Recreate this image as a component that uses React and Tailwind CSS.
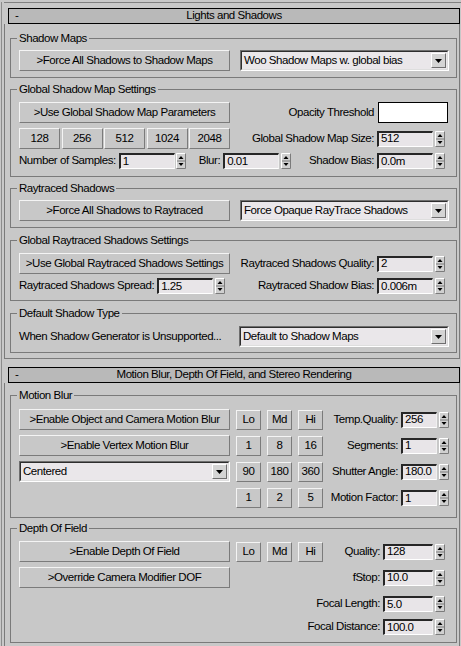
import React from "react";

function Btn({ children, className = "" }) {
  return (
    <button
      type="button"
      className={`flex shrink-0 items-center justify-center whitespace-nowrap border border-t-[#f4f4f4] border-l-[#f4f4f4] border-r-[#7b7b7b] border-b-[#7b7b7b] bg-[#c8c8c8] leading-none text-black ${className}`}
    >
      {children}
    </button>
  );
}

function Dropdown({ value, className = "" }) {
  return (
    <div className={`flex h-[21px] shrink-0 items-stretch border border-t-[#6e6e6e] border-l-[#6e6e6e] border-b-white border-r-white ${className}`}>
      <div className="flex flex-1 items-stretch border border-t-[#2e2e2e] border-l-[#2e2e2e] border-b-[#dedede] border-r-[#dedede] bg-[#eae7ea]">
        <span className="flex flex-1 items-center whitespace-nowrap pl-[2px]">{value}</span>
        <span className="m-[1px] flex w-[15px] items-center justify-center border border-t-white border-l-white border-b-[#6e6e6e] border-r-[#6e6e6e] bg-[#d4d4d4]">
          <svg width="7" height="4" viewBox="0 0 7 4">
            <path d="M0 0H7L3.5 4Z" fill="#000" />
          </svg>
        </span>
      </div>
    </div>
  );
}

function SpinArrows({ className = "" }) {
  return (
    <svg width="10" height="16" viewBox="0 0 10 16" className={`shrink-0 ${className}`}>
      <rect x="0" y="0" width="10" height="16" fill="#d0d0d0" />
      <path d="M0.5 15.5V0.5H9.5" stroke="#fff" fill="none" />
      <path d="M9.5 0.5V15.5H0.5" stroke="#7b7b7b" fill="none" />
      <path d="M1 8H9" stroke="#7b7b7b" />
      <path d="M5 3L7.5 6H2.5Z" fill="#000" />
      <path d="M5 13L7.5 10H2.5Z" fill="#000" />
    </svg>
  );
}

function Spinner({ value, inputClass = "w-[56px]", arrowsClass = "ml-[2px]" }) {
  return (
    <div className="flex shrink-0 items-center">
      <div
        className={`flex h-[16px] items-center border-t-2 border-l-2 border-b border-r border-t-[#262626] border-l-[#262626] border-b-white border-r-[#f0f0f0] bg-[#e8e5e8] pl-[2px] leading-none ${inputClass}`}
      >
        {value}
      </div>
      <SpinArrows className={arrowsClass} />
    </div>
  );
}

function Field({ label, value, inputClass, arrowsClass, className = "" }) {
  return (
    <div className={`flex shrink-0 items-center ${className}`}>
      <span className="whitespace-nowrap">{label}</span>
      <div className="ml-[3px]">
        <Spinner value={value} inputClass={inputClass} arrowsClass={arrowsClass} />
      </div>
    </div>
  );
}

function Group({ title, className = "", children }) {
  return (
    <fieldset className={`border border-[#7a7a7a] pl-[8px] pr-[7px] ${className}`}>
      <legend className="-ml-[2px] px-[2px] leading-[14px]">{title}</legend>
      {children}
    </fieldset>
  );
}

function RolloutHeader({ title }) {
  return (
    <div className="ml-[4px] flex h-[16px] w-[452px] items-center border border-black bg-[#b9b9b9] leading-none">
      <span className="w-[20px] pl-[6px]">-</span>
      <span className="flex-1 pr-[20px] text-center">{title}</span>
    </div>
  );
}

function Small({ children }) {
  return <Btn className="h-[20px] w-[25px]">{children}</Btn>;
}

function SmallSet({ items }) {
  return (
    <div className="ml-[6px] flex gap-[6px]">
      {items.map((t, i) => (
        <Small key={i}>{t}</Small>
      ))}
    </div>
  );
}

export default function App() {
  return (
    <div className="h-[646px] w-[461px] overflow-hidden bg-[#c8c8c8] pl-[1px] font-['Liberation_Sans',Arial,sans-serif] text-[11.5px] tracking-[-0.45px] text-black">
      <div className="h-full border-l border-[#8c8c8c] pl-[2px]">
        <div className="mt-[2px] h-px bg-[#808080]" />

        {/* Lights and Shadows */}
        <div className="mt-[5px]">
          <RolloutHeader title="Lights and Shadows" />
          <div className="w-[456px] border-x border-b border-[#7a7a7a] pb-[5px] pl-[5px] pr-[2px] pt-[7px]">
            <Group title="Shadow Maps" className="pb-[6px] pt-[5px]">
              <div className="flex h-[21px] items-center">
                <Btn className="h-[21px] w-[211px]">&gt;Force All Shadows to Shadow Maps</Btn>
                <Dropdown value="Woo Shadow Maps w. global bias" className="ml-auto w-[209px]" />
              </div>
            </Group>

            <Group title="Global Shadow Map Settings" className="mt-[4px] pb-[5px] pt-[6px]">
              <div className="flex h-[21px] items-center">
                <Btn className="h-[21px] w-[211px]">&gt;Use Global Shadow Map Parameters</Btn>
                <div className="ml-auto mr-[1px] flex items-center">
                  <span>Opacity Threshold</span>
                  <div className="ml-[4px] h-[21px] w-[70px] border border-black bg-white" />
                </div>
              </div>
              <div className="mt-[5px] flex h-[21px] items-center">
                <div className="flex w-[211px] justify-between">
                  {["128", "256", "512", "1024", "2048"].map((s) => (
                    <Btn key={s} className="h-[21px] w-[41px]">
                      {s}
                    </Btn>
                  ))}
                </div>
                <Field label="Global Shadow Map Size:" value="512" className="ml-auto mr-[4px]" />
              </div>
              <div className="mt-[2px] flex h-[20px] items-center">
                <Field label="Number of Samples:" value="1" arrowsClass="ml-[1px]" />
                <Field label="Blur:" value="0.01" className="ml-[13px]" />
                <Field label="Shadow Bias:" value="0.0m" className="ml-auto mr-[4px]" />
              </div>
            </Group>

            <Group title="Raytraced Shadows" className="mt-[4px] pb-[6px] pt-[5px]">
              <div className="flex h-[21px] items-center">
                <Btn className="h-[21px] w-[211px]">&gt;Force All Shadows to Raytraced</Btn>
                <Dropdown value="Force Opaque RayTrace Shadows" className="ml-auto w-[209px]" />
              </div>
            </Group>

            <Group title="Global Raytraced Shadows Settings" className="mt-[5px] pb-[4px] pt-[6px]">
              <div className="flex h-[21px] items-center">
                <Btn className="h-[21px] w-[211px]">&gt;Use Global Raytraced Shadows Settings</Btn>
                <Field label="Raytraced Shadows Quality:" value="2" className="ml-auto mr-[4px]" />
              </div>
              <div className="mt-[2px] flex h-[20px] items-center">
                <Field label="Raytraced Shadows Spread:" value="1.25" />
                <Field label="Raytraced Shadow Bias:" value="0.006m" className="ml-auto mr-[4px]" />
              </div>
            </Group>

            <Group title="Default Shadow Type" className="mt-[5px] pb-[5px] pt-[6px]">
              <div className="flex h-[21px] items-center">
                <span className="whitespace-nowrap">When Shadow Generator is Unsupported...</span>
                <Dropdown value="Default to Shadow Maps" className="ml-auto w-[210px]" />
              </div>
            </Group>
          </div>
        </div>

        {/* Motion Blur, Depth Of Field, and Stereo Rendering */}
        <div className="mt-[8px]">
          <RolloutHeader title="Motion Blur, Depth Of Field, and Stereo Rendering" />
          <div className="w-[456px] border-x border-b border-[#7a7a7a] pb-[5px] pl-[5px] pr-[2px] pt-[5px]">
            <Group title="Motion Blur" className="pb-[9px] pt-[7px]">
              <div className="flex h-[21px] items-center">
                <Btn className="h-[21px] w-[211px]">&gt;Enable Object and Camera Motion Blur</Btn>
                <SmallSet items={["Lo", "Md", "Hi"]} />
                <Field label="Temp.Quality:" value="256" inputClass="w-[36px]" className="ml-auto" />
              </div>
              <div className="mt-[5px] flex h-[21px] items-center">
                <Btn className="h-[21px] w-[211px]">&gt;Enable Vertex Motion Blur</Btn>
                <SmallSet items={["1", "8", "16"]} />
                <Field label="Segments:" value="1" inputClass="w-[36px]" className="ml-auto" />
              </div>
              <div className="mt-[5px] flex h-[21px] items-center">
                <Dropdown value="Centered" className="w-[211px]" />
                <SmallSet items={["90", "180", "360"]} />
                <Field label="Shutter Angle:" value="180.0" inputClass="w-[36px]" className="ml-auto" />
              </div>
              <div className="mt-[6px] flex h-[20px] items-center">
                <div className="w-[211px]" />
                <SmallSet items={["1", "2", "5"]} />
                <Field label="Motion Factor:" value="1" inputClass="w-[36px]" className="ml-auto" />
              </div>
            </Group>

            <Group title="Depth Of Field" className="mt-[3px] pb-[5px] pt-[6px]">
              <div className="flex h-[21px] items-center">
                <Btn className="h-[21px] w-[211px]">&gt;Enable Depth Of Field</Btn>
                <SmallSet items={["Lo", "Md", "Hi"]} />
                <Field label="Quality:" value="128" inputClass="w-[50px]" className="ml-auto mr-[4px]" />
              </div>
              <div className="mt-[5px] flex h-[21px] items-center">
                <Btn className="h-[21px] w-[211px]">&gt;Override Camera Modifier DOF</Btn>
                <Field label="fStop:" value="10.0" inputClass="w-[50px]" className="ml-auto mr-[4px]" />
              </div>
              <div className="mt-[6px] flex h-[20px] items-center">
                <Field label="Focal Length:" value="5.0" inputClass="w-[50px]" className="ml-auto mr-[4px]" />
              </div>
              <div className="mt-[3px] flex h-[20px] items-center">
                <Field label="Focal Distance:" value="100.0" inputClass="w-[50px]" className="ml-auto mr-[4px]" />
              </div>
            </Group>
          </div>
        </div>
      </div>
    </div>
  );
}
